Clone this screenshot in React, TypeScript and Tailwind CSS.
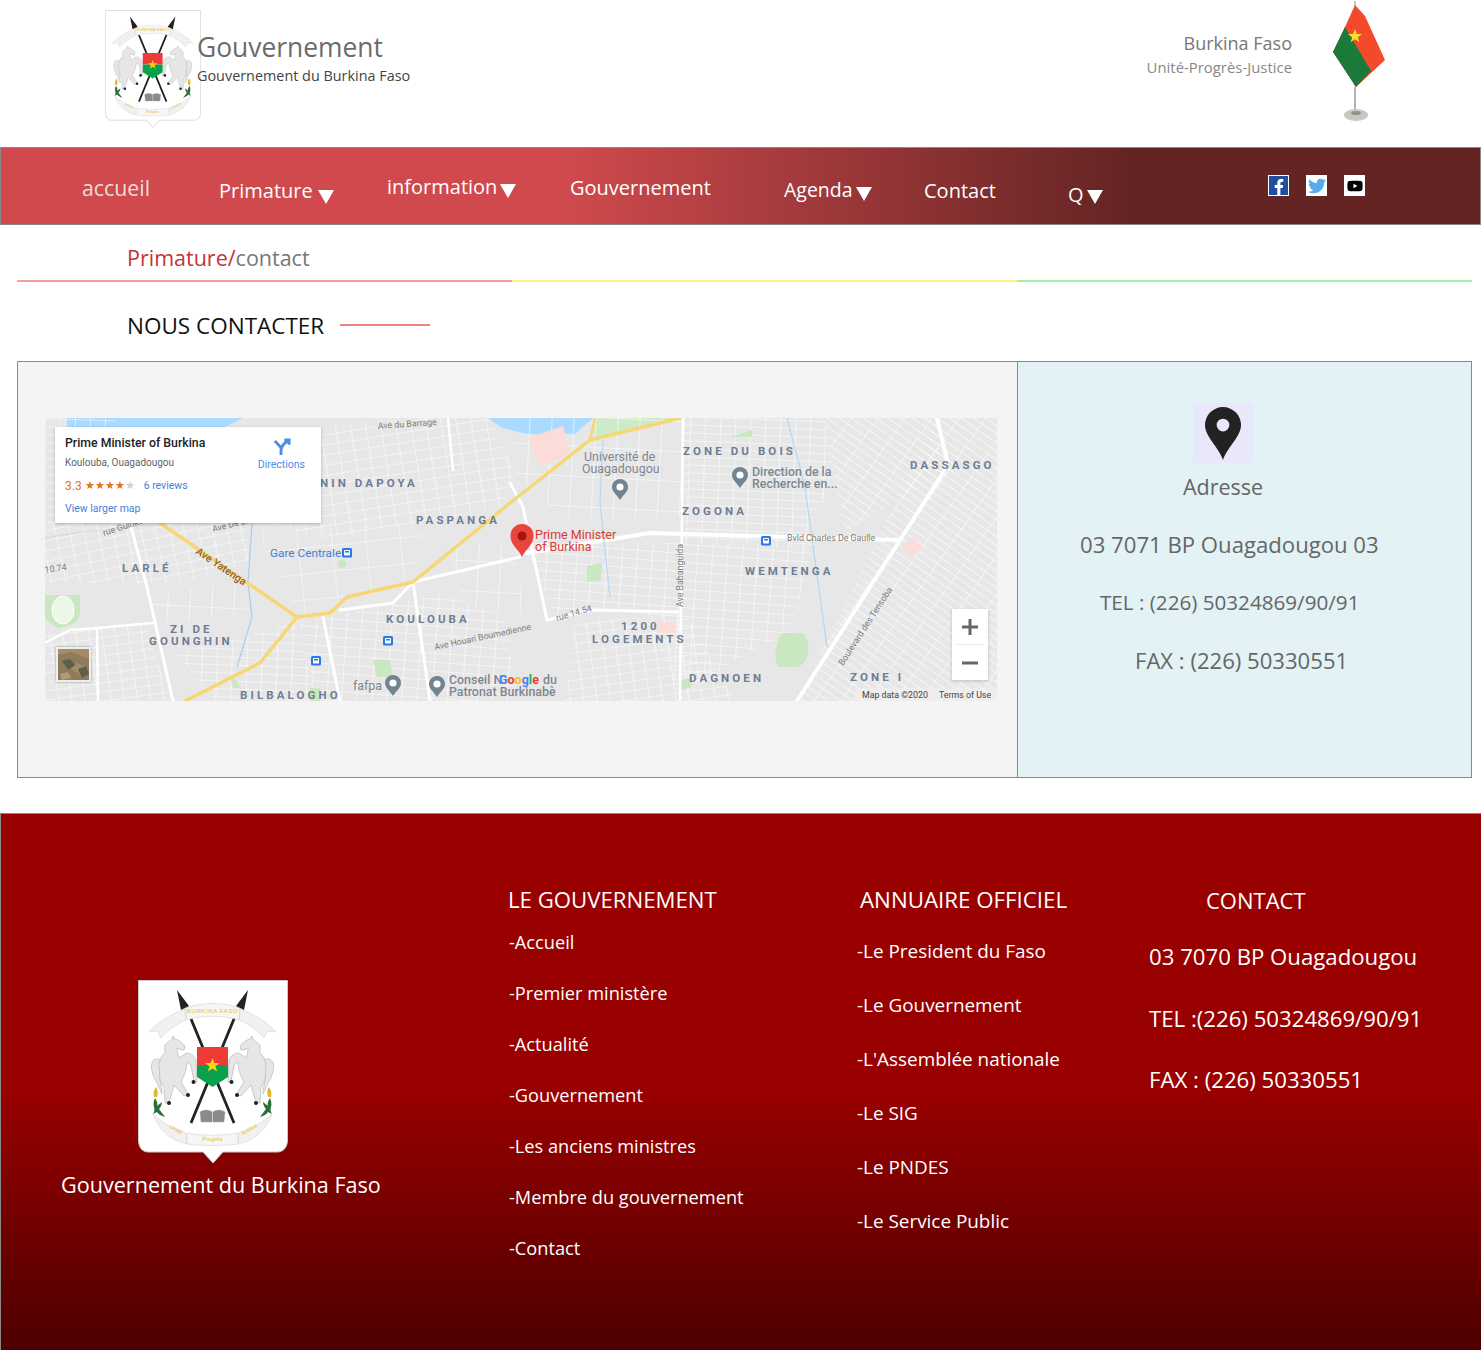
import React from "react";
import { FaFacebookF, FaTwitter, FaYoutube } from "react-icons/fa";

const LG = "fill-[#5a6b85]";

function Emblem({ className }: { className: string }) {
  const horse = "M34 59l1-3 2 3c4 1 7 3 10 7l-1 4-3 0-4-2c0 4 1 7 2 10 3-2 6-5 9-5 4 1 7 4 8 7l1 22h-3l-3-17-4-3-1 8c-1 4-3 8-5 12l8 13-5 1-10-11-5 18h-4l-1-16-4-7-1-15c1-6 3-10 6-12l0-8z";
  const tail = "M24 80c-4-2-8-1-9 1-2 3-2 7-1 10 1 5 3 9 5 12l5 11c0-5-1-9-2-14l1-12z";
  return (
    <svg viewBox="0 0 150 184" className={className}>
      <path d="M0.5 0.500H149.500V160c0 7-4 12-10 12H85l-10 11-10-11H10c-6 0-9.500-5-9.500-12z" fill="#fff" stroke="#c9c9c9" />
      <path d="M46 22 96 143M103 22 53 143" stroke="#222" strokeWidth="2.800" />
      <path d="M39 10 43 30 51 26zM110 10 106 30 98 26z" fill="#222" />
      <g fill="#f1f1f1" stroke="#d2d2d2" strokeWidth=".6">
        <path d="M47 29C33 34 20 42 11 52L20 51 23 58C31 49 40 43 48 40z" />
        <path d="M102 29C116 34 129 42 138 52L129 51 126 58C118 49 109 43 101 40z" />
        <path d="M47 28C65 22 84 22 102 28l-1 12C84 35 65 35 49 40z" fill="#f6f6f6" />
      </g>
      <text x="74.500" y="33" textAnchor="middle" fontSize="6.200" fill="#e8c030" letterSpacing=".5" fontFamily="Liberation Sans, sans-serif">BURKINA FASO</text>
      <g fill="#e6e6e6" stroke="#b9b9b9" strokeWidth=".7">
        <path d={tail} />
        <path d={horse} />
        <g transform="translate(149 0) scale(-1 1)">
          <path d={tail} />
          <path d={horse} />
        </g>
      </g>
      <g fill="#222">
        <circle cx="55.500" cy="102" r="2" />
        <circle cx="50" cy="115" r="2" />
        <circle cx="31" cy="123" r="2" />
        <circle cx="93.500" cy="102" r="2" />
        <circle cx="99" cy="115" r="2" />
        <circle cx="118" cy="123" r="2" />
      </g>
      <path d="M59 67h31v18H59z" fill="#ef3b36" />
      <path d="M59 85h31v12l-15.500 10L59 97z" fill="#0aa14e" />
      <path d="m74.500 78 1.900 5h5.500l-4.400 3.300 1.600 5.300-4.600-3.200-4.600 3.200 1.600-5.300L67 83h5.600z" fill="#fcd116" />
      <path d="M17 118c2 3 3 6 2 8l5-4c0 3-2 6-3 7l6 8c-3-1-6-2-8-5l-4 2c1-2 2-4 1-7-1-3 0-7 1-9zM132 118c-2 3-3 6-2 8l-5-4c0 3 2 6 3 7l-6 8c3-1 6-2 8-5l4 2c-1-2-2-4-1-7 1-3 0-7-1-9z" fill="#2c6e3a" />
      <path d="M16 117c-1-4 0-7 2-10 2 3 2 7 1 10zM133 117c1-4 0-7-2-10-2 3-2 7-1 10z" fill="#e5b62b" />
      <path d="M62 132c5-3 9-2 12.500 0 3.500-2 7.500-3 12.500 0l-1 10H63z" fill="#8a8a8a" stroke="#aaa" strokeWidth=".5" />
      <path d="M74.500 132v10" stroke="#eee" strokeWidth=".7" />
      <g fill="#f1f1f1" stroke="#d2d2d2" strokeWidth=".6">
        <path d="M15 134C26 144 36 149 48 153l1 11C33 160 22 152 15 134z" />
        <path d="M134 134C123 144 113 149 101 153l-1 11C116 160 127 152 134 134z" />
        <path d="M49 153c17 3 34 3 51 0v11c-17 2-34 2-51 0z" fill="#f6f6f6" />
      </g>
      <g fontSize="5.800" fill="#e8c030" textAnchor="middle" fontFamily="Liberation Sans, sans-serif">
        <text x="74.500" y="161">Progrès</text>
        <text x="37" y="151" transform="rotate(28 37 151)">Unité</text>
        <text x="112" y="151" transform="rotate(-28 112 151)">Justice</text>
      </g>
    </svg>
  );
}

function Flag() {
  return (
    <svg viewBox="0 0 60 122" className="h-[122px] w-[60px]">
      <path d="M22 1v85" stroke="#b5b5b5" strokeWidth="1.500" />
      <path d="M22 5 12 27 0 52 23 87 52 60 32 16z" fill="#f4492b" />
      <path d="M12 27 0 52 23 87 38 71z" fill="#1a7a3a" />
      <path d="m22 29 1.800 5h5.200l-4.200 3.200 1.600 5.100-4.400-3.100-4.400 3.100 1.600-5.100-4.200-3.200h5.200z" fill="#f5e02d" />
      <path d="M22 87v23" stroke="#b3b3b3" strokeWidth="2" />
      <ellipse cx="23" cy="115" rx="12" ry="6" fill="#c5cbc2" />
      <ellipse cx="23" cy="113" rx="5" ry="2" fill="#8e948a" />
    </svg>
  );
}

function Caret({ className = "" }: { className?: string }) {
  return <span className={`inline-block h-0 w-0 shrink-0 border-x-[8px] border-t-[14px] border-x-transparent border-t-white ${className}`} />;
}

function BusStop({ x, y }: { x: number; y: number }) {
  return (
    <g transform={`translate(${x} ${y})`}>
      <rect width="10" height="9.500" rx="1.500" fill="#2979e8" />
      <rect x="2" y="2" width="6" height="5.500" rx=".8" fill="#fff" />
      <rect x="3" y="3" width="4" height="1.500" fill="#2979e8" />
    </g>
  );
}

function Poi({ x, y, c = "#70858f" }: { x: number; y: number; c?: string }) {
  return (
    <g transform={`translate(${x} ${y})`}>
      <path d="M0 0C-3-5-8-8-8-13a8 8 0 1 1 16 0C8-8 3-5 0 0z" fill={c} />
      <circle cy="-13" r="3.600" fill="#fff" />
    </g>
  );
}

function MapCanvas() {
  const P = (id: string, w: number, h: number, rot: number, sw = 1.100) => (
    <pattern id={id} width={w} height={h} patternUnits="userSpaceOnUse" patternTransform={`rotate(${rot})`}>
      <path d={`M0 0H${w}M0 0V${h}`} stroke="#fff" strokeWidth={sw} fill="none" />
    </pattern>
  );
  const labels: [string, number, number][] = [
    ["NIN DAPOYA", 275, 69],
    ["PASPANGA", 371, 106],
    ["LARLÉ", 77, 154],
    ["KOULOUBA", 341, 205],
    ["ZONE DU BOIS", 638, 37],
    ["DASSASGO", 865, 51],
    ["ZOGONA", 637, 97],
    ["WEMTENGA", 700, 157],
    ["ZI DE", 125, 215],
    ["GOUNGHIN", 104, 227],
    ["1200", 576, 212],
    ["LOGEMENTS", 547, 225],
    ["BILBALOGHO", 195, 281],
    ["DAGNOEN", 644, 264],
    ["ZONE I", 805, 263],
  ];
  return (
    <svg viewBox="0 0 952 283" className="block h-[283px] w-[952px]" fontFamily="Roboto, sans-serif">
      <defs>
        {P("a", 15, 9, 4)}
        {P("b", 13, 9, -8)}
        {P("c", 7, 22, -55, 1.200)}
        {P("d", 14, 10, -12)}
        {P("e", 15, 10, -9)}
        {P("f", 15, 8, 2)}
        {P("g", 22, 30, 3)}
        {P("h", 34, 26, -6, 1)}
      </defs>
      <rect width="952" height="283" fill="#e7e7e7" />
      <path d="M22 0H198L180 9H22z" fill="#aadaff" />
      <path d="M442 0H548L530 16H482L458 10z" fill="#aadaff" />
      <path d="M550 0H632L560 20 548 20z" fill="#cdebc8" />
      <path d="M0 0H70V105H0z" fill="url(#f)" />
      <path d="M0 105H200L205 145 140 165H0z" fill="url(#d)" />
      <path d="M278 9 360 0H445L468 50 460 88 375 105 285 120 215 105 275 50z" fill="url(#e)" />
      <path d="M210 112 380 105 368 160 295 190 252 195z" fill="url(#h)" />
      <path d="M0 215 100 205 125 283H0z" fill="url(#b)" />
      <path d="M100 175 200 165 205 195 120 205z" fill="url(#g)" />
      <path d="M130 235 250 205 272 283H170z" fill="url(#f)" />
      <path d="M255 205 400 175 462 200 470 283H270z" fill="url(#a)" />
      <path d="M400 120 470 130 480 195 420 190z" fill="url(#g)" />
      <path d="M470 0H640V100L520 100 470 60z" fill="url(#g)" />
      <path d="M636 0H780L790 60 755 130 636 125z" fill="url(#f)" />
      <path d="M780 0H892L895 55 800 115 790 60z" fill="url(#c)" />
      <path d="M480 125H770L745 215 700 235 636 283 600 190 510 200z" fill="url(#a)" />
      <path d="M892 0H952V283H752z" fill="url(#c)" />
      <path d="M530 205 640 195 690 283H520z" fill="url(#b)" />
      <path d="M0 177H35V195C35 205 20 210 12 210L0 200z" fill="#c9e7c0" />
      <ellipse cx="18" cy="192" rx="11" ry="14" fill="#eef6ea" stroke="#fff" />
      <path d="M483 20 518 8 525 37 495 48z" fill="#fbdcd9" />
      <path d="M857 129 868 119 878 129 867 140z" fill="#fbdcd9" />
      <path d="M737 215H758C766 222 766 245 752 249H733C728 238 731 225 737 215z" fill="#c9e7c0" />
      <path d="M542 148 557 145 556 162 542 164z" fill="#c9e7c0" />
      <path d="M685 19 707 12V19z" fill="#c9e7c0" />
      <path d="M328 242H345L348 259H332z" fill="#c9e7c0" />
      <circle cx="297" cy="146" r="4" fill="#c9e7c0" />
      <path d="M185 259 192 262 195 270 188 270z" fill="#c9e7c0" />
      <path d="M265 270H275V283H265z" fill="#c9e7c0" />
      <path d="M612 204h18v11h-18z" fill="#fbdcd9" />
      <path d="M635 262 647 260 646 270 636 272z" fill="#c9e7c0" />
      <g fill="none" stroke="#fff" strokeLinecap="round" strokeLinejoin="round">
        <path d="M482 135 605 115 855 122" strokeWidth="4" />
        <path d="M752 283 898 55 902 42 892 0" strokeWidth="4" />
        <path d="M638 0 635 283" strokeWidth="2.500" />
        <path d="M465 65 478 89 502 202 548 192 633 194" strokeWidth="3" />
        <path d="M368 164 475 139" strokeWidth="3" />
        <path d="M295 192 348 185 368 164 385 283" strokeWidth="3" />
        <path d="M278 199 295 283" strokeWidth="3" />
        <path d="M85 105 102 169 128 283" strokeWidth="3" />
        <path d="M0 225 25 212 52 210 108 205M52 210 53 283" strokeWidth="2.500" />
        <path d="M403 0 408 52" strokeWidth="2.500" />
      </g>
      <path d="M240 88 C150 105 50 110 0 120" stroke="#d8d8d8" fill="none" />
      <path d="M207 105 203 165 207 199 192 249" stroke="#a9cff0" strokeWidth="1.200" fill="none" />
      <path d="M558 22 555 85 565 179M742 0 760 69 782 229" stroke="#b5d8f3" strokeWidth="1.200" fill="none" />
      <g fill="none" stroke="#f7d774" strokeLinecap="round" strokeLinejoin="round">
        <path d="M115 105 252 199 285 195 302 179 368 164 465 85 545 22 635 0" strokeWidth="3.500" />
        <path d="M252 199 215 245 140 283" strokeWidth="3.500" />
        <path d="M545 22 550 0" strokeWidth="2.500" />
      </g>
      <g fontWeight="700" fontSize="11.500" className={LG} letterSpacing="3.100" opacity=".85">
        {labels.map(([t, x, y]) => (
          <text key={t} x={x} y={y}>{t}</text>
        ))}
      </g>
      <g fontSize="8.800" fill="#7c7c7c">
        <text x="333" y="11" transform="rotate(-4 333 11)">Ave du Barrage</text>
        <text x="59" y="118" transform="rotate(-18 59 118)">rue Guinko</text>
        <text x="168" y="114" transform="rotate(-14 168 114)">Ave De La</text>
        <text x="0" y="155" transform="rotate(-8 0 155)">10.74</text>
        <text x="390" y="232" transform="rotate(-12 390 232)">Ave Houari Boumedienne</text>
        <text x="512" y="203" transform="rotate(-16 512 203)">rue 14.54</text>
        <text x="742" y="123">Bvld Charles De Gaulle</text>
        <text x="638" y="189" transform="rotate(-90 638 189)">Ave Babanguida</text>
        <text x="798" y="248" transform="rotate(-57 798 248)">Boulevard des Tensoba</text>
      </g>
      <text x="150" y="135" transform="rotate(34 150 135)" fontSize="10.500" fontWeight="500" fill="#94642a">Ave Yatenga</text>
      <g fontSize="12.400" fill="#7d8791">
        <text x="539" y="43">Université de</text>
        <text x="537" y="55">Ouagadougou</text>
        <text x="707" y="58" fontWeight="500">Direction de la</text>
        <text x="707" y="70" fontWeight="500">Recherche en...</text>
        <text x="308" y="272">fafpa</text>
        <text x="404" y="266" fontWeight="500">Conseil N</text>
        <text x="404" y="278" fontWeight="500">Patronat Burkinabè</text>
        <text x="498" y="266" fontWeight="500">du</text>
      </g>
      <Poi x={575} y={82} />
      <Poi x={695} y={70} />
      <Poi x={348} y={278} />
      <Poi x={392} y={279} />
      <text x="225" y="139" fontSize="11.800" fill="#3f81d8">Gare Centrale</text>
      <BusStop x={297} y={130} />
      <BusStop x={338} y={218} />
      <BusStop x={266} y={238} />
      <BusStop x={716} y={118} />
      <g transform="translate(477 139)">
        <path d="M0 0C-3-8-11.500-11-11.500-21.500a11.500 11.500 0 1 1 23 0C11.500-11 3-8 0 0z" fill="#e8453c" />
        <circle cy="-21" r="4.500" fill="#a5150f" />
      </g>
      <text x="490" y="121" fontSize="12.500" fill="#d83a32">Prime Minister</text>
      <text x="490" y="133" fontSize="12.500" fill="#d83a32">of Burkina</text>
      <text x="454" y="266" fontSize="12.500" fontWeight="700">
        <tspan fill="#4285f4">G</tspan><tspan fill="#ea4335">o</tspan><tspan fill="#fbbc05">o</tspan><tspan fill="#4285f4">g</tspan><tspan fill="#34a853">l</tspan><tspan fill="#ea4335">e</tspan>
      </text>
      <rect x="810" y="270" width="142" height="13" fill="#f2f2f2" fillOpacity=".6" />
      <text x="817" y="280" fontSize="8.800" fill="#444">Map data ©2020</text>
      <text x="894" y="280" fontSize="8.800" fill="#444">Terms of Use</text>
    </svg>
  );
}

function InfoCard() {
  return (
    <div className="absolute left-[10px] top-[9px] flex h-[96px] w-[266px] justify-between bg-white pl-[10px] pr-[16px] pt-[8px] shadow-[0_1px_3px_rgba(0,0,0,0.25)] font-['Roboto',sans-serif]">
      <div>
        <div className="whitespace-nowrap text-[12.300px] font-medium leading-[16px] text-[#202124]">Prime Minister of Burkina</div>
        <div className="mt-[4px] text-[10px] leading-[16px] text-[#5f6368]">Koulouba, Ouagadougou</div>
        <div className="mt-[8px] flex items-center text-[10.500px] leading-[14px]">
          <span className="text-[12px] text-[#e7711b]">3.3</span>
          <span className="ml-[3px] text-[10.500px] text-[#e7711b]">★★★★<span className="text-[#d0d0d0]">★</span></span>
          <span className="ml-[9px] text-[#3f81d8]">6 reviews</span>
        </div>
        <div className="mt-[9px] text-[10.500px] leading-[14px] text-[#3f81d8]">View larger map</div>
      </div>
      <div className="flex flex-col items-center pt-[3px] text-[10.500px] text-[#4a8fe7]">
        <svg viewBox="0 0 20 20" className="h-[19px] w-[19px]">
          <path d="M9.500 18V10L3 3M9.500 12c1-4 3-7 8-9M13 2h5v5" fill="none" stroke="#4a8fe7" strokeWidth="3" />
        </svg>
        <span className="mt-[1px] leading-[14px]">Directions</span>
      </div>
    </div>
  );
}

const navBase = "self-start text-[20px] leading-[30px] whitespace-nowrap";
const leftLinks = ["-Accueil", "-Premier ministère", "-Actualité", "-Gouvernement", "-Les anciens ministres", "-Membre du gouvernement", "-Contact"];
const midLinks = ["-Le President du Faso", "-Le Gouvernement", "-L'Assemblée nationale", "-Le SIG", "-Le PNDES", "-Le Service Public"];

export default function App() {
  return (
    <div className="w-[1481px] overflow-hidden bg-white font-['Open_Sans',sans-serif]">
      <header className="flex h-[147px] items-start pl-[105px] pr-[88px]">
        <Emblem className="mt-[10px] h-[118px] w-[96px]" />
        <div className="-ml-[4px] mt-[28px]">
          <div className="text-[26.400px] leading-[38px] text-[#6b6b6b]">Gouvernement</div>
          <div className="text-[14.400px] leading-[20px] text-[#444]">Gouvernement du Burkina Faso</div>
        </div>
        <div className="ml-auto mr-[41px] mt-[30px] text-right">
          <div className="text-[18px] leading-[27px] text-[#777]">Burkina Faso</div>
          <div className="text-[14.900px] leading-[20px] text-[#888]">Unité-Progrès-Justice</div>
        </div>
        <Flag />
      </header>

      <nav className="flex h-[78px] border border-[#8a8a8a] bg-[linear-gradient(90deg,#d04a4d_0%,#d04a4d_38%,#652424_76%,#652424_100%)] text-white">
        <div className="ml-[81px] mt-[25px] w-[137px] self-start text-[21.300px] leading-[30px] text-[#eadede]">accueil</div>
        <div className={`mt-[28px] flex w-[168px] items-center ${navBase}`}>Primature<Caret className="ml-[5px] mt-[12px]" /></div>
        <div className={`mt-[24px] flex w-[183px] items-center ${navBase}`}>information<Caret className="ml-[3px] mt-[8px]" /></div>
        <div className={`mt-[25px] w-[214px] ${navBase}`}>Gouvernement</div>
        <div className={`mt-[27px] flex w-[140px] items-center ${navBase} !text-[19.500px]`}>Agenda<Caret className="ml-[3px] mt-[8px]" /></div>
        <div className={`mt-[28px] w-[144px] ${navBase}`}>Contact</div>
        <div className={`mt-[32px] flex w-[200px] items-center ${navBase}`}>Q<Caret className="ml-[3px] mt-[3px]" /></div>
        <div className="mt-[27px] flex h-[21px] gap-[17px]">
          <div className="flex h-[21px] w-[21px] items-center justify-center bg-white"><div className="flex h-[19px] w-[19px] items-end justify-center bg-[#1f4f9e]"><FaFacebookF className="h-[16px] w-[16px] text-white" /></div></div>
          <div className="flex h-[21px] w-[21px] items-center justify-center bg-white"><FaTwitter className="h-[18px] w-[18px] text-[#55acee]" /></div>
          <div className="flex h-[21px] w-[21px] items-center justify-center bg-white"><FaYoutube className="h-[16px] w-[16px] text-black" /></div>
        </div>
      </nav>

      <div className="ml-[127px] mt-[18px] text-[21.500px] leading-[30px]">
        <span className="text-[#c13538]">Primature/</span><span className="text-[#777]">contact</span>
      </div>
      <div className="ml-[17px] mr-[9px] mt-[7px] flex h-[2px]">
        <div className="w-[495px] bg-[#f59c9c]" />
        <div className="w-[505px] bg-[#fbf08c]" />
        <div className="flex-1 bg-[#a0f2a0]" />
      </div>

      <div className="ml-[127px] mt-[29px] flex items-center">
        <div className="text-[22.500px] leading-[30px] text-[#111]">NOUS CONTACTER</div>
        <div className="mb-[2px] ml-[16px] h-[2px] w-[90px] bg-[#ec8280]" />
      </div>

      <section className="ml-[17px] mr-[9px] mt-[20px] flex h-[417px] border border-[#8a8a8a]">
        <div className="w-[999px] bg-[#f4f4f4] pl-[27px] pt-[56px]">
          <div className="relative h-[283px] w-[952px]">
            <MapCanvas />
            <InfoCard />
            <div className="absolute left-[11px] top-[229px] h-[35px] w-[35px] overflow-hidden border-2 border-[#eee] shadow-[0_0_2px_rgba(0,0,0,0.4)]">
              <svg viewBox="0 0 31 31" className="h-full w-full">
                <rect width="31" height="31" fill="#8f7c5c" />
                <path d="M0 6 14 3 31 10V0H0zM18 14l9 3-6 8-8-5z" fill="#a48c68" />
                <path d="M4 12l8-2 5 6-7 5zM20 20l8-3 3 8-7 4z" fill="#5e5f48" />
                <path d="M2 25l8-2 3 6-9 2z" fill="#b19a78" />
              </svg>
            </div>
            <div className="absolute left-[907px] top-[191px] flex h-[71px] w-[36px] flex-col items-center justify-between bg-white text-[#666] shadow-[0_1px_3px_rgba(0,0,0,0.2)]">
              <svg viewBox="0 0 36 35" className="h-[35px] w-[36px]"><path d="M18 10v16M10 18h16" stroke="#666" strokeWidth="3" /></svg>
              <div className="h-px w-[26px] bg-[#e6e6e6]" />
              <svg viewBox="0 0 36 35" className="h-[35px] w-[36px]"><path d="M10 18h16" stroke="#666" strokeWidth="3" /></svg>
            </div>
          </div>
        </div>
        <div className="flex-1 border-l border-[#8a8a8a] bg-[#e2f2f5] text-[#666]">
          <div className="ml-[175px] mt-[41px] flex h-[60px] w-[60px] items-center justify-center bg-[#e9e8fb]">
            <svg viewBox="0 0 34 50" className="h-[53px] w-[36px]">
              <path fillRule="evenodd" d="M17 50C13 38 0 28 0 17a17 17 0 0 1 34 0c0 11-13 21-17 33zm0-27a6 6 0 1 0 0-12 6 6 0 0 0 0 12z" fill="#222" />
            </svg>
          </div>
          <div className="ml-[165px] mt-[9px] text-[21.500px] leading-[30px]">Adresse</div>
          <div className="ml-[62px] mt-[27px] whitespace-nowrap text-[22.150px] leading-[30px]">03 7071 BP Ouagadougou 03</div>
          <div className="ml-[82px] mt-[28px] whitespace-nowrap text-[20.650px] leading-[30px]">TEL : (226) 50324869/90/91</div>
          <div className="ml-[117px] mt-[28px] whitespace-nowrap text-[22.100px] leading-[30px]">FAX : (226) 50330551</div>
        </div>
      </section>

      <footer className="mt-[35px] h-[537px] border-l border-t border-[#8a8a8a] bg-[linear-gradient(180deg,#990000_0%,#990000_52%,#4d0000_100%)] text-white">
        <div className="flex">
          <div className="ml-[60px] mt-[166px] w-[447px]">
            <Emblem className="ml-[77px] h-[184px] w-[150px]" />
            <div className="mt-[6px] whitespace-nowrap text-[21.600px] leading-[30px]">Gouvernement du Burkina Faso</div>
          </div>
          <div className="mt-[71px] w-[349px]">
            <div className="text-[22.200px] leading-[30px]">LE GOUVERNEMENT</div>
            <ul className="ml-[1px] mt-[13px] flex flex-col gap-[23px] text-[18.200px] leading-[28px]">
              {leftLinks.map((l) => <li key={l}>{l}</li>)}
            </ul>
          </div>
          <div className="mt-[71px] w-[292px]">
            <div className="ml-[3px] text-[22.300px] leading-[30px]">ANNUAIRE OFFICIEL</div>
            <ul className="mt-[22px] flex flex-col gap-[26px] text-[18.900px] leading-[28px]">
              {midLinks.map((l) => <li key={l}>{l}</li>)}
            </ul>
          </div>
          <div className="mt-[71px]">
            <div className="ml-[57px] text-[22px] leading-[30px]">CONTACT</div>
            <div className="mt-[27px] whitespace-nowrap text-[22.200px] leading-[30px]">03 7070 BP Ouagadougou</div>
            <div className="mt-[32px] whitespace-nowrap text-[22.200px] leading-[30px]">TEL :(226) 50324869/90/91</div>
            <div className="mt-[31px] whitespace-nowrap text-[22.200px] leading-[30px]">FAX : (226) 50330551</div>
          </div>
        </div>
      </footer>
    </div>
  );
}
